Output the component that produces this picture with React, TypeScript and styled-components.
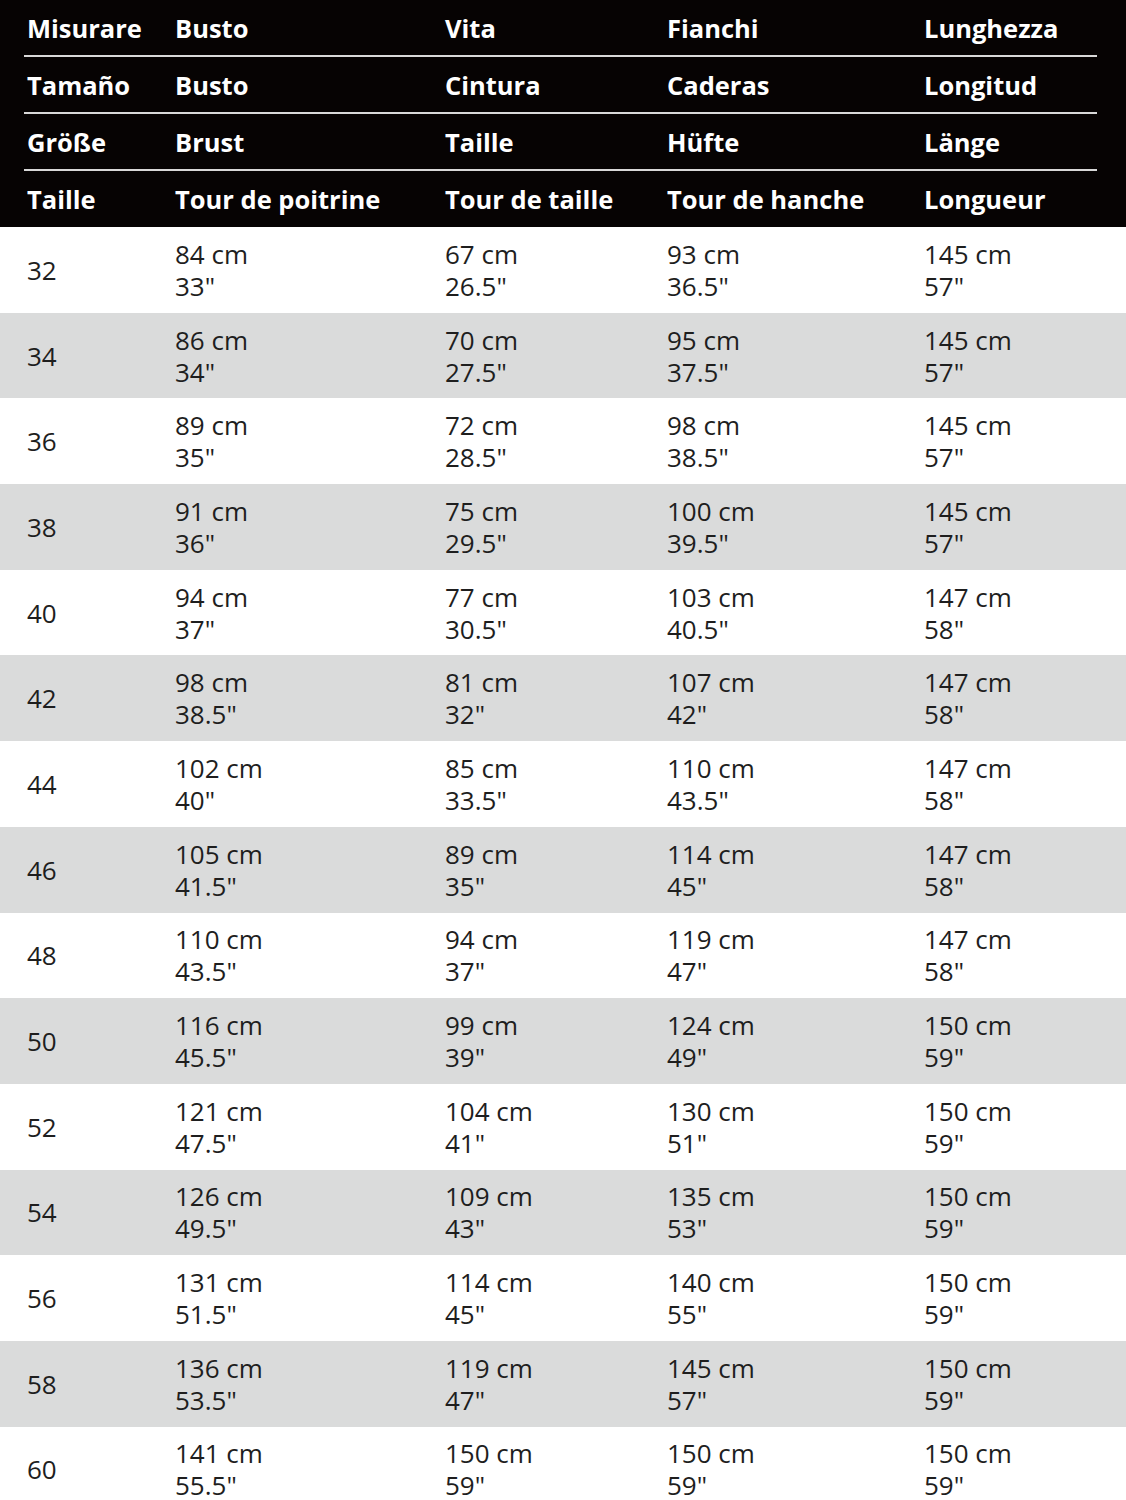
import React from "react";
import styled, { createGlobalStyle } from "styled-components";

const Global = createGlobalStyle`
  html, body { margin: 0; padding: 0; background: #ffffff; }
  body { font-family: "Open Sans", "Noto Sans", sans-serif; }
`;

const Table = styled.div`
  width: 1126px;
  display: flex;
  flex-direction: column;
`;

const Header = styled.div`
  background: #060303;
  display: flex;
  flex-direction: column;
  padding: 0 29px 0 24px;
`;

const HeaderRow = styled.div<{ $last?: boolean }>`
  display: grid;
  grid-template-columns: 148px 270px 222px 257px 1fr;
  align-items: center;
  height: ${(p) => (p.$last ? "56px" : "55px")};
  padding-left: 3px;
  border-bottom: ${(p) => (p.$last ? "none" : "2px solid #d8d8d8")};
`;

const HeadCell = styled.div`
  color: #ffffff;
  font-weight: 700;
  font-size: 25.5px;
  letter-spacing: 0;
  white-space: nowrap;
`;

const Row = styled.div<{ $alt: boolean }>`
  display: grid;
  grid-template-columns: 148px 270px 222px 257px 1fr;
  align-items: center;
  height: 85.7px;
  padding-left: 27px;
  background: ${(p) => (p.$alt ? "#dadbdb" : "#ffffff")};
  color: #1e1e1e;
  font-size: 26px;
  line-height: 32px;
`;

const Cell = styled.div`
  display: flex;
  flex-direction: column;
  white-space: nowrap;
`;

const headers = [
  ["Misurare", "Busto", "Vita", "Fianchi", "Lunghezza"],
  ["Tamaño", "Busto", "Cintura", "Caderas", "Longitud"],
  ["Größe", "Brust", "Taille", "Hüfte", "Länge"],
  ["Taille", "Tour de poitrine", "Tour de taille", "Tour de hanche", "Longueur"],
];

type Pair = [string, string];
type R = [string, Pair, Pair, Pair, Pair];

const rows: R[] = [
  ["32", ["84 cm", '33"'], ["67 cm", '26.5"'], ["93 cm", '36.5"'], ["145 cm", '57"']],
  ["34", ["86 cm", '34"'], ["70 cm", '27.5"'], ["95 cm", '37.5"'], ["145 cm", '57"']],
  ["36", ["89 cm", '35"'], ["72 cm", '28.5"'], ["98 cm", '38.5"'], ["145 cm", '57"']],
  ["38", ["91 cm", '36"'], ["75 cm", '29.5"'], ["100 cm", '39.5"'], ["145 cm", '57"']],
  ["40", ["94 cm", '37"'], ["77 cm", '30.5"'], ["103 cm", '40.5"'], ["147 cm", '58"']],
  ["42", ["98 cm", '38.5"'], ["81 cm", '32"'], ["107 cm", '42"'], ["147 cm", '58"']],
  ["44", ["102 cm", '40"'], ["85 cm", '33.5"'], ["110 cm", '43.5"'], ["147 cm", '58"']],
  ["46", ["105 cm", '41.5"'], ["89 cm", '35"'], ["114 cm", '45"'], ["147 cm", '58"']],
  ["48", ["110 cm", '43.5"'], ["94 cm", '37"'], ["119 cm", '47"'], ["147 cm", '58"']],
  ["50", ["116 cm", '45.5"'], ["99 cm", '39"'], ["124 cm", '49"'], ["150 cm", '59"']],
  ["52", ["121 cm", '47.5"'], ["104 cm", '41"'], ["130 cm", '51"'], ["150 cm", '59"']],
  ["54", ["126 cm", '49.5"'], ["109 cm", '43"'], ["135 cm", '53"'], ["150 cm", '59"']],
  ["56", ["131 cm", '51.5"'], ["114 cm", '45"'], ["140 cm", '55"'], ["150 cm", '59"']],
  ["58", ["136 cm", '53.5"'], ["119 cm", '47"'], ["145 cm", '57"'], ["150 cm", '59"']],
  ["60", ["141 cm", '55.5"'], ["150 cm", '59"'], ["150 cm", '59"'], ["150 cm", '59"']],
];

export default function App() {
  return (
    <>
      <Global />
      <Table>
        <Header>
          {headers.map((h, i) => (
            <HeaderRow key={i} $last={i === headers.length - 1}>
              {h.map((t, j) => (
                <HeadCell key={j}>{t}</HeadCell>
              ))}
            </HeaderRow>
          ))}
        </Header>
        {rows.map((r, i) => (
          <Row key={r[0]} $alt={i % 2 === 1}>
            <Cell>{r[0]}</Cell>
            {[r[1], r[2], r[3], r[4]].map((c, j) => (
              <Cell key={j}>
                <span>{c[0]}</span>
                <span>{c[1]}</span>
              </Cell>
            ))}
          </Row>
        ))}
      </Table>
    </>
  );
}
